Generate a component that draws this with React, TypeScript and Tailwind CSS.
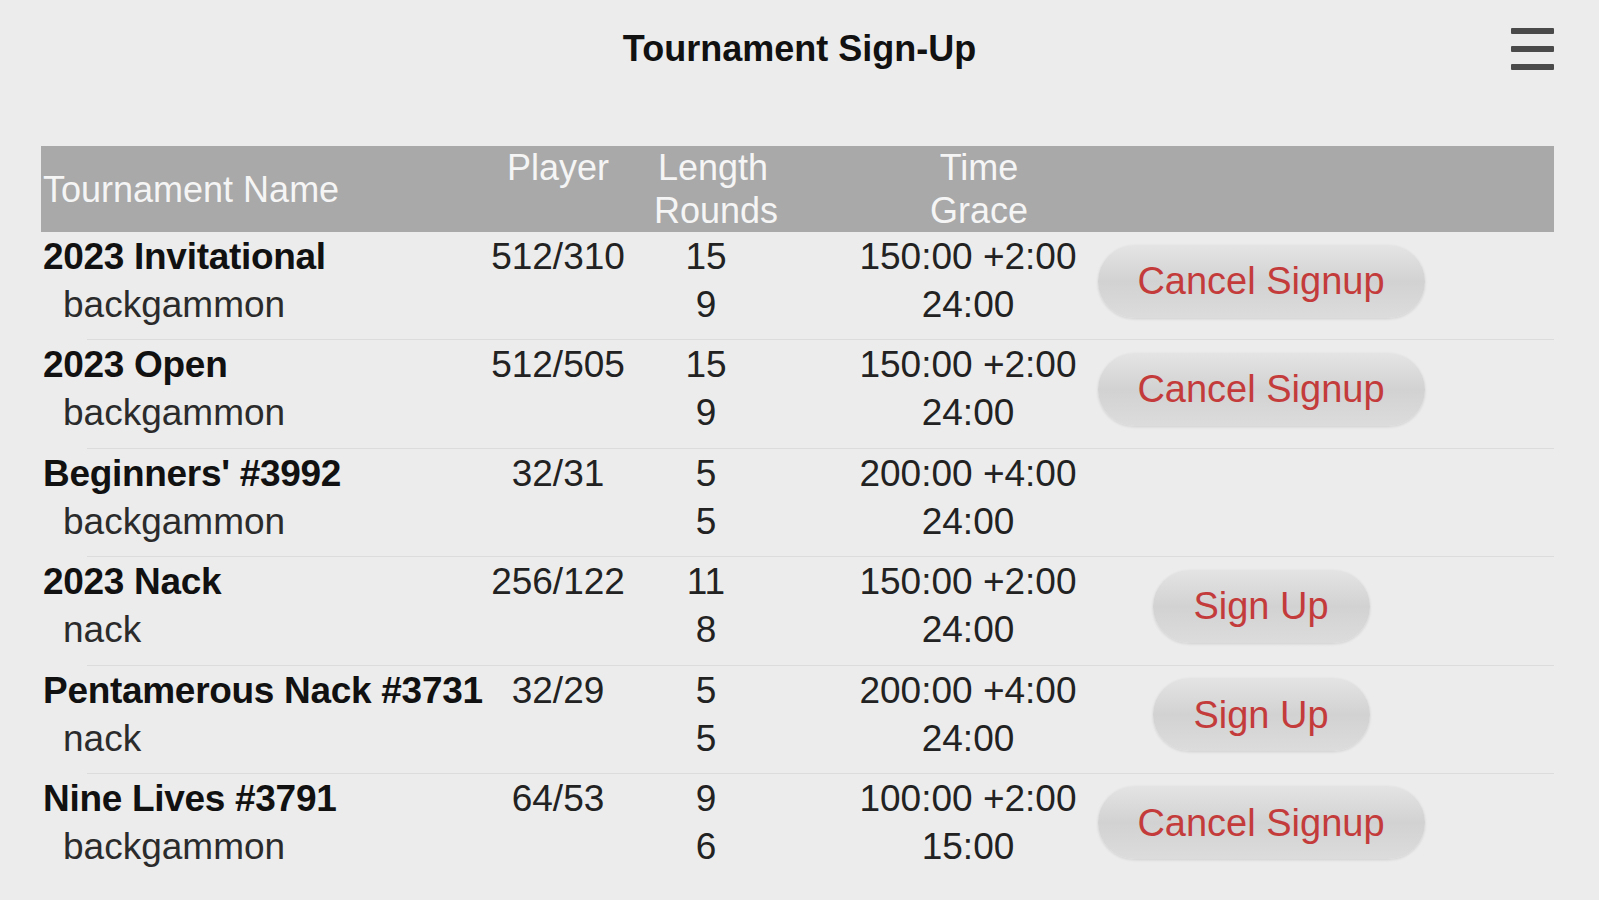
import { Fragment } from 'react';

interface Tournament {
  name: string;
  variant: string;
  players: string;
  length: string;
  rounds: string;
  time: string;
  grace: string;
  action?: 'cancel' | 'signup';
}

const tournaments: Tournament[] = [
  { name: '2023 Invitational', variant: 'backgammon', players: '512/310', length: '15', rounds: '9', time: '150:00 +2:00', grace: '24:00', action: 'cancel' },
  { name: '2023 Open', variant: 'backgammon', players: '512/505', length: '15', rounds: '9', time: '150:00 +2:00', grace: '24:00', action: 'cancel' },
  { name: "Beginners' #3992", variant: 'backgammon', players: '32/31', length: '5', rounds: '5', time: '200:00 +4:00', grace: '24:00' },
  { name: '2023 Nack', variant: 'nack', players: '256/122', length: '11', rounds: '8', time: '150:00 +2:00', grace: '24:00', action: 'signup' },
  { name: 'Pentamerous Nack #3731', variant: 'nack', players: '32/29', length: '5', rounds: '5', time: '200:00 +4:00', grace: '24:00', action: 'signup' },
  { name: 'Nine Lives #3791', variant: 'backgammon', players: '64/53', length: '9', rounds: '6', time: '100:00 +2:00', grace: '15:00', action: 'cancel' },
];

const cols = 'grid grid-cols-[435px_164px_132px_312px_354px_1fr]';

function PillButton({ label, wide }: { label: string; wide?: boolean }) {
  return (
    <button
      className={`${wide ? 'w-[327px]' : 'w-[217px]'} h-[73px] rounded-full bg-gradient-to-b from-[#e4e4e4] via-[#d2d2d2] to-[#dcdcdc] text-[38px] text-[#c43b3b] shadow-[0_1px_3px_rgba(0,0,0,0.12)]`}
    >
      {label}
    </button>
  );
}

export default function App() {
  return (
    <div className="min-h-screen bg-[#ececec] font-['Liberation_Sans',Arial,sans-serif] pl-[41px] pr-[45px]">
      {/* Title bar */}
      <div className="relative h-[98px] flex items-center justify-center">
        <h1 className="text-[36px] font-bold text-[#111] pl-[4px]">Tournament Sign-Up</h1>
        <svg className="absolute right-0 top-[27px]" width="44" height="44" viewBox="0 0 44 44">
          <rect x="1" y="1" width="43" height="6" rx="1" fill="#4a4a4a" />
          <rect x="1" y="19" width="43" height="6" rx="1" fill="#4a4a4a" />
          <rect x="1" y="37" width="43" height="6" rx="1" fill="#4a4a4a" />
        </svg>
      </div>

      {/* Table */}
      <div className="mt-[48px]">
        <div className={`${cols} h-[86px] bg-[#a9a9a9] text-[36px] leading-[43px] text-[#f5f5f5]`}>
          <div className="self-center pl-[2px]">Tournament Name</div>
          <div className="text-center">Player</div>
          <div className="text-center pl-[14px]">
            Length
            <br />
            Rounds
          </div>
          <div className="text-center pl-[102px]">
            Time
            <br />
            Grace
          </div>
          <div />
          <div />
        </div>

        {tournaments.map((t, i) => (
          <Fragment key={t.name}>
            <div className={`${cols} items-center pt-[1px] pb-[10.4px] text-[37px] leading-[48px] text-[#222]`}>
              <div className="pl-[2px]">
                <div className="font-bold text-[#111] whitespace-nowrap tracking-[-0.3px]">{t.name}</div>
                <div className="pl-[20px] text-[#2b2b2b]">{t.variant}</div>
              </div>
              <div className="self-start text-center">{t.players}</div>
              <div className="text-center">
                <div>{t.length}</div>
                <div>{t.rounds}</div>
              </div>
              <div className="text-center pl-[80px] whitespace-nowrap">
                <div>{t.time}</div>
                <div>{t.grace}</div>
              </div>
              <div className="flex justify-center">
                {t.action === 'cancel' && <PillButton label="Cancel Signup" wide />}
                {t.action === 'signup' && <PillButton label="Sign Up" />}
              </div>
              <div />
            </div>
            {i < tournaments.length - 1 && <div className="ml-[46px] border-t border-[#dcdcdc]" />}
          </Fragment>
        ))}
      </div>
    </div>
  );
}
